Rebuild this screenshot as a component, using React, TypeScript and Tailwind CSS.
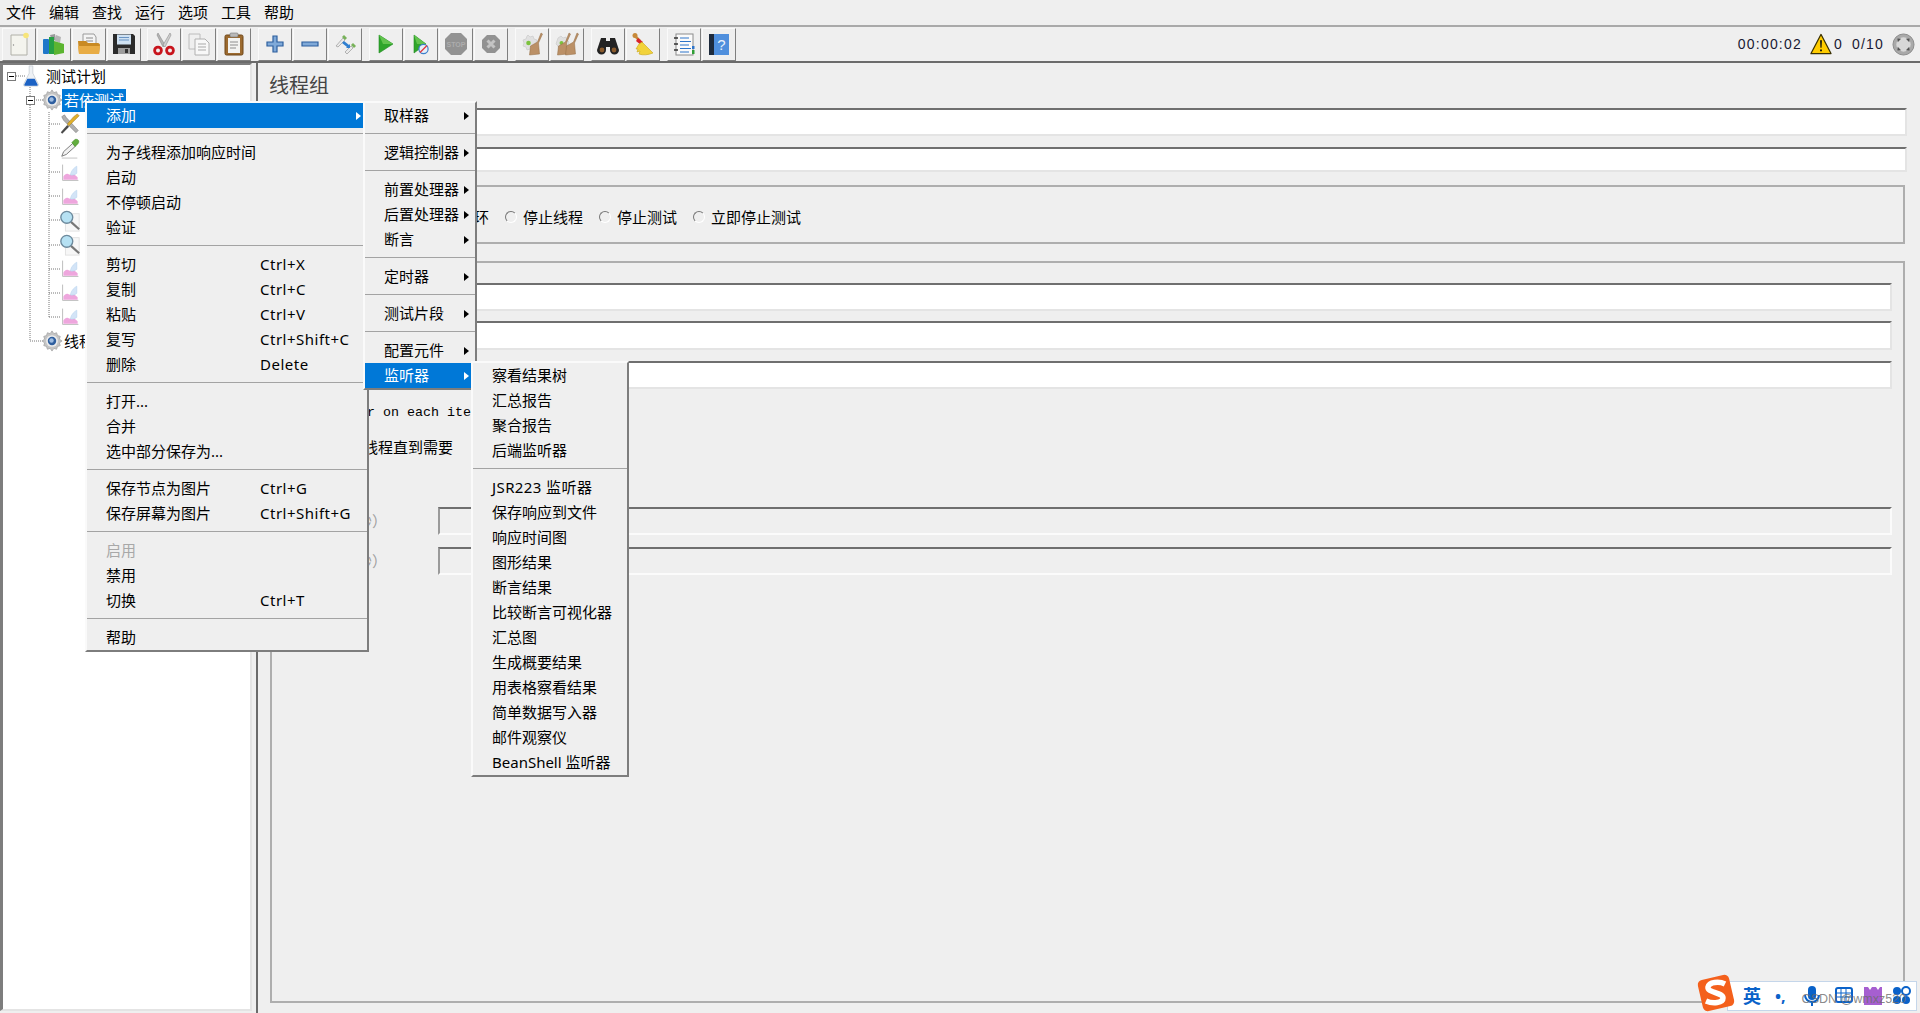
import React from 'react';

const menuBar = ['文件', '编辑', '查找', '运行', '选项', '工具', '帮助'];

type Row = { label?: string; keys?: string; arrow?: boolean; active?: boolean; off?: boolean; sep?: boolean; wide?: boolean };

const mainMenu: Row[] = [
  { label: '添加', arrow: true, active: true },
  { sep: true },
  { label: '为子线程添加响应时间' },
  { label: '启动' },
  { label: '不停顿启动' },
  { label: '验证' },
  { sep: true },
  { label: '剪切', keys: 'Ctrl+X' },
  { label: '复制', keys: 'Ctrl+C' },
  { label: '粘贴', keys: 'Ctrl+V' },
  { label: '复写', keys: 'Ctrl+Shift+C' },
  { label: '删除', keys: 'Delete' },
  { sep: true },
  { label: '打开...' },
  { label: '合并' },
  { label: '选中部分保存为...' },
  { sep: true },
  { label: '保存节点为图片', keys: 'Ctrl+G' },
  { label: '保存屏幕为图片', keys: 'Ctrl+Shift+G' },
  { sep: true },
  { label: '启用', off: true },
  { label: '禁用' },
  { label: '切换', keys: 'Ctrl+T' },
  { sep: true },
  { label: '帮助' },
];

const addMenu: Row[] = [
  { label: '取样器', arrow: true },
  { sep: true },
  { label: '逻辑控制器', arrow: true },
  { sep: true },
  { label: '前置处理器', arrow: true },
  { label: '后置处理器', arrow: true },
  { label: '断言', arrow: true },
  { sep: true },
  { label: '定时器', arrow: true },
  { sep: true },
  { label: '测试片段', arrow: true },
  { sep: true },
  { label: '配置元件', arrow: true },
  { label: '监听器', arrow: true, active: true },
];

const listenerMenu: Row[] = [
  { label: '察看结果树' },
  { label: '汇总报告' },
  { label: '聚合报告' },
  { label: '后端监听器' },
  { sep: true },
  { label: 'JSR223 监听器', wide: true },
  { label: '保存响应到文件' },
  { label: '响应时间图' },
  { label: '图形结果' },
  { label: '断言结果' },
  { label: '比较断言可视化器' },
  { label: '汇总图' },
  { label: '生成概要结果' },
  { label: '用表格察看结果' },
  { label: '简单数据写入器' },
  { label: '邮件观察仪' },
  { label: 'BeanShell 监听器' },
];

const Icon = ({ children, size = 24 }: { children: React.ReactNode; size?: number }) => (
  <svg width={size} height={size} viewBox="0 0 24 24" className="shrink-0">
    {children}
  </svg>
);

const Gear = ({ size = 22 }: { size?: number }) => (
  <Icon size={size}>
    <path d="M12 1l2 3 3-1 1 3 3 1-1 3 3 2-3 2 1 3-3 1-1 3-3-1-2 3-2-3-3 1-1-3-3-1 1-3-3-2 3-2-1-3 3-1 1-3 3 1z" fill="#c4c4c4" stroke="#a0a0a0" strokeWidth="0.8" />
    <circle cx="12" cy="12" r="6.400" fill="#ececec" />
    <circle cx="12" cy="12" r="4.600" fill="#2f5f9f" />
    <circle cx="11.500" cy="11.500" r="2.400" fill="#9dbbe0" />
  </Icon>
);

const Flask = () => (
  <Icon size={22}>
    <path d="M10 1h4v8l6 12c.5 1.200-.2 2-1.400 2H5.400C4.200 23 3.500 22.200 4 21l6-12z" fill="#eef1f5" stroke="#c2c9d0" strokeWidth="0.8" />
    <path d="M8 15h8l3.200 6.200c.3.9-.2 1.400-1 1.400H5.800c-.8 0-1.300-.5-1-1.400z" fill="#1c62c4" />
  </Icon>
);

const Tools = () => (
  <Icon size={22}>
    <path d="M3 4l3-2 2 3 13 14-2.500 2.500L5 8z" fill="#b0b0b0" stroke="#666" strokeWidth="0.5" />
    <path d="M22 3l-2-2-4 3-7 8 2 2 8-8z" fill="#e0b02c" stroke="#8c6c18" strokeWidth="0.5" />
    <path d="M9 13l-7 8 1.500 1.500L11 15z" fill="#4a4a4a" />
  </Icon>
);

const Pipette = () => (
  <Icon size={22}>
    <path d="M3 21l2-5L15 7l3 3-10 9z" fill="#f2f2f2" stroke="#666" strokeWidth="0.9" />
    <path d="M14 6l3-3c1.200-1 3.500-.5 4.300.7.800 1.300.2 2.800-.8 3.800l-3 3z" fill="#62ad3e" stroke="#3e8124" strokeWidth="0.5" />
    <path d="M3 23h17" stroke="#d5d5d5" strokeWidth="1.500" />
  </Icon>
);

const Chart = () => (
  <Icon size={19}>
    <path d="M2 2v20h20" fill="none" stroke="#b5b5b5" strokeWidth="1.100" />
    <path d="M3 21v-4c2-3 4-4 6-3s3 1 5 0 5 2 7 4v3z" fill="#eea6dd" />
    <path d="M12 15c0-4 4-9 8-11v9c-2 2-6 3-8 2z" fill="#d3e4f7" stroke="#a7c6e8" strokeWidth="0.5" />
  </Icon>
);

const Lens = () => (
  <Icon size={22}>
    <rect x="7" y="4" width="15" height="19" fill="#f7f7f7" stroke="#e0e0e0" />
    <path d="M13 13l9 8" stroke="#777" strokeWidth="2.400" />
    <circle cx="8.500" cy="8" r="6.500" fill="#b6e1f3" stroke="#6d8a9d" strokeWidth="1.500" />
  </Icon>
);

const Broom = ({ x = 0 }: { x?: number }) => (
  <path transform={`translate(${x} 0)`} d="M21 1l1.500 1-4 9 1 11-10 1 1-9 7-4z" fill="#bb9066" stroke="#936c44" strokeWidth="0.5" />
);

const toolbar: React.ReactNode[][] = [
  [
    <Icon key="new">
      <path d="M4 3h13l3 3v17H4z" fill="#f4f4ee" stroke="#b0b0a8" />
      <circle cx="19" cy="3.500" r="2.800" fill="#f7e57a" />
      <circle cx="6.500" cy="13" r="0.700" fill="#888" />
    </Icon>,
    <Icon key="templates">
      <path d="M8 3l5-1 1 6-4 1z" fill="#9a9a9a" />
      <path d="M14 3l5 2-1 6-5-2z" fill="#b5b5b5" />
      <rect x="1" y="7" width="6" height="15" rx="1" fill="#1f77c9" />
      <rect x="7" y="5" width="5" height="17" fill="#27a045" />
      <path d="M12 9l10 3v9l-10 2z" fill="#5cb531" />
    </Icon>,
    <Icon key="open">
      <path d="M6 2h11l2 3v8H6z" fill="#f4f4f4" stroke="#9a9a9a" />
      <path d="M9 6h7M9 9h7" stroke="#8a8a8a" />
      <path d="M1 9h8l2 2h10c1 0 2 1 2 2l-1 9H2z" fill="#c98a23" />
      <path d="M1 14h22l-1 8H2z" fill="#e8ac45" />
    </Icon>,
    <Icon key="save">
      <path d="M1 2h20l2 2v18H1z" fill="#2b2b2b" />
      <rect x="5" y="2.500" width="14" height="10" fill="#cfe1f2" />
      <path d="M7 5.500h10M7 8h10" stroke="#6b95c4" />
      <rect x="6" y="16" width="12" height="6" fill="#9c9c9c" />
      <rect x="13" y="17" width="3" height="4" fill="#333" />
    </Icon>,
  ],
  [
    <Icon key="cut">
      <path d="M6 1l7 12-2 2L5 3z" fill="#b5b5b5" stroke="#7d7d7d" strokeWidth="0.5" />
      <path d="M18 1l-7 12 2 2 6-12z" fill="#cfcfcf" stroke="#7d7d7d" strokeWidth="0.5" />
      <circle cx="6" cy="18.500" r="3.400" fill="none" stroke="#c8141c" strokeWidth="2.800" />
      <circle cx="18" cy="18.500" r="3.400" fill="none" stroke="#c8141c" strokeWidth="2.800" />
    </Icon>,
    <Icon key="copy">
      <path d="M2 2h11v15H2z" fill="#efefef" stroke="#bcbcbc" />
      <path d="M8 7h10l4 4v12H8z" fill="#f8f8f8" stroke="#b0b0b0" />
      <path d="M11 12h8M11 15h8M11 18h8" stroke="#a9a9a9" />
    </Icon>,
    <Icon key="paste">
      <rect x="3" y="3" width="18" height="20" rx="1.500" fill="#9c6a2f" stroke="#6e4718" />
      <rect x="8" y="1" width="8" height="4" rx="1" fill="#b9b9b9" stroke="#777" strokeWidth="0.6" />
      <path d="M6 6h12v15H6z" fill="#f3f3f1" />
      <path d="M8 10h8M8 13h8M8 16h6" stroke="#8d8d8d" />
    </Icon>,
  ],
  [
    <Icon key="plus">
      <path d="M10 4h4v6h6v4h-6v6h-4v-6H4v-4h6z" fill="#7fa9d8" stroke="#2d5f9e" strokeWidth="1.200" />
    </Icon>,
    <Icon key="minus">
      <path d="M4 10h16v4H4z" fill="#7fa9d8" stroke="#2d5f9e" strokeWidth="1.200" />
    </Icon>,
    <Icon key="toggle">
      <path d="M3 14l7-8 2 2-7 7z" fill="#e9e9e9" stroke="#9a9a9a" strokeWidth="0.7" />
      <path d="M9 5l2-2 3 3-2 2z" fill="#78b25a" />
      <path d="M12 20l6-6 2 2-6 6z" fill="#e9e9e9" stroke="#9a9a9a" strokeWidth="0.7" />
      <path d="M18 13l2-2 3 3-2 2z" fill="#78b25a" />
      <path d="M9 11l5 4-1 1h4v-4l-1 1-5-4z" fill="#2f7fd0" />
    </Icon>,
  ],
  [
    <Icon key="start">
      <path d="M5 3l14 9-14 9z" fill="#2fa52a" stroke="#1f8a22" strokeWidth="0.6" />
      <path d="M5 3l14 9H9z" fill="#62c34d" />
    </Icon>,
    <Icon key="start-nt">
      <path d="M5 3l12 9-12 9z" fill="#2fa52a" stroke="#1f8a22" strokeWidth="0.6" />
      <path d="M5 3l12 9H8z" fill="#62c34d" />
      <circle cx="14.500" cy="17" r="4.600" fill="#e6eff9" stroke="#3d7fcb" strokeWidth="1.200" />
      <path d="M11 20.500l7-7" stroke="#e3343c" strokeWidth="1.200" />
    </Icon>,
    <Icon key="stop">
      <path d="M7 1h10l6 6v10l-6 6H7l-6-6V7z" fill="#929292" />
      <text x="12" y="14.500" textAnchor="middle" fontSize="7" fontWeight="700" fill="#adadad" fontFamily="Liberation Sans">STOP</text>
    </Icon>,
    <Icon key="shutdown">
      <path d="M8 3h8l5 5v8l-5 5H8l-5-5V8z" fill="#929292" />
      <path d="M8.500 8.500l7 7M15.500 8.500l-7 7" stroke="#c4c4c4" strokeWidth="3" />
    </Icon>,
  ],
  [
    <Icon key="clear">
      <path d="M8 3l2 2 3-1 1 3 3 1-1 3 1 3-3 1-1 3-3-1-3 1-1-3-3-1 1-3-1-3 3-1 1-3z" fill="#e0e0e0" stroke="#c6c6c6" strokeWidth="0.6" />
      <circle cx="8.500" cy="11" r="2.300" fill="#7cc23e" />
      <Broom />
    </Icon>,
    <Icon key="clear-all">
      <path d="M6 4l2 2 3-1 1 3 2 2-1 3 0 3-3 1-3-1-3 1-1-3-2-2 1-3 1-3z" fill="#e0e0e0" stroke="#c6c6c6" strokeWidth="0.6" />
      <circle cx="6.500" cy="11" r="2" fill="#7cc23e" />
      <Broom x={-7} />
      <Broom x={1} />
    </Icon>,
  ],
  [
    <Icon key="search">
      <path d="M5 6h5v3h4V6h5l4 12a4.500 4.500 0 0 1-9 0v-3h-4v3a4.500 4.500 0 0 1-9 0z" fill="#232323" />
      <circle cx="6" cy="18" r="2.400" fill="#8a5a2b" />
      <circle cx="18" cy="18" r="2.400" fill="#8a5a2b" />
    </Icon>,
    <Icon key="reset">
      <circle cx="4" cy="3.500" r="2.500" fill="#c78a3a" />
      <path d="M4 4l5 5" stroke="#c78a3a" strokeWidth="2.500" />
      <path d="M7 6l5 4-2 3-5-4z" fill="#d8232a" />
      <path d="M11 10l11 11c-5 2-10 2.500-14 1l1-3-3 1 1-3-2 0 3-5z" fill="#f2d33b" stroke="#c9a71c" strokeWidth="0.6" />
    </Icon>,
  ],
  [
    <Icon key="functions">
      <rect x="4" y="2" width="17" height="21" fill="#fafafa" stroke="#8c8c8c" />
      <path d="M8 6h9M8 9.500h11M8 13h9M8 16.500h11M8 20h9" stroke="#2d74c9" strokeWidth="1.100" />
      <path d="M2 6h4M2 12h4M2 18h4" stroke="#333" strokeWidth="1.600" />
      <rect x="20" y="14" width="2.500" height="3" fill="#2d74c9" />
      <rect x="20" y="18" width="2.500" height="4" fill="#2f9e36" />
    </Icon>,
    <Icon key="help">
      <rect x="4" y="2" width="18" height="21" fill="#4f8fdd" />
      <rect x="2" y="2" width="5" height="21" fill="#1d2a3c" />
      <text x="14.500" y="18" textAnchor="middle" fontSize="15" fill="#e8f1fb" fontFamily="Liberation Sans">?</text>
    </Icon>,
  ],
];

const treeRows: { icon: React.ReactNode; label?: string; depth: number; selected?: boolean }[] = [
  { icon: <Gear />, label: '若依测试', depth: 1, selected: true },
  { icon: <Tools />, depth: 2 },
  { icon: <Pipette />, depth: 2 },
  { icon: <Chart />, depth: 2 },
  { icon: <Chart />, depth: 2 },
  { icon: <Lens />, depth: 2 },
  { icon: <Lens />, depth: 2 },
  { icon: <Chart />, depth: 2 },
  { icon: <Chart />, depth: 2 },
  { icon: <Chart />, depth: 2 },
  { icon: <Gear />, label: '线程组', depth: 1 },
];

const Expander = () => (
  <span className="flex h-[9px] w-[9px] shrink-0 items-center justify-center border border-[#7a7a7a] bg-white">
    <span className="h-px w-[5px] bg-black" />
  </span>
);

const Field = ({ disabled }: { disabled?: boolean }) => (
  <div
    className={`flex-1 border-[2px] border-t-[#6f6f6f] border-l-[#9a9a9a] ${
      disabled ? 'border-r-[#fbfbfb] border-b-[#fbfbfb] bg-[#efefef]' : 'border-r-[#e4e4e4] border-b-[#e4e4e4] bg-white'
    }`}
  />
);

const Radio = () => (
  <span className="h-[12px] w-[12px] shrink-0 rounded-full border-[1.5px] border-t-[#777777] border-l-[#777777] border-r-[#ffffff] border-b-[#ffffff] bg-[#efefef]" />
);

const Menu = ({ rows, className, shortcuts }: { rows: Row[]; className: string; shortcuts?: boolean }) => (
  <div className={`absolute flex flex-col border-[2px] border-t-[#fafafa] border-l-[#fafafa] border-r-[#7d7d7d] border-b-[#7d7d7d] bg-[#efefef] ${className}`}>
    {rows.map((r, i) =>
      r.sep ? (
        <div key={i} className="h-[12px] pt-[5px]">
          <div className="h-[1px] bg-[#a3a3a3]" />
        </div>
      ) : (
        <div key={i} className={`relative flex h-[25px] items-center pl-[19px] ${r.active ? 'bg-[#0078d7] text-white' : r.off ? 'text-[#a8a8a8]' : 'text-black'}`}>
          <span className={`whitespace-nowrap ${r.wide ? 'tracking-[0.4px]' : ''}`}>{r.label}</span>
          {shortcuts && r.keys && <span className="absolute left-[173px] whitespace-nowrap tracking-[0.5px]">{r.keys}</span>}
          {r.arrow && (
            <span className={`absolute right-[6px] h-0 w-0 border-y-[4.5px] border-l-[5px] border-y-transparent ${r.active ? 'border-l-white' : 'border-l-black'}`} />
          )}
        </div>
      ),
    )}
  </div>
);

export default function App() {
  return (
    <div className="relative flex h-[1013px] w-full flex-col overflow-hidden bg-[#efefef] font-['Noto_Sans','Noto_Sans_CJK_SC',sans-serif] text-[15px] leading-none text-black">
      <div className="flex h-[25px] items-center gap-[13px] pl-[6px]">
        {menuBar.map((m) => (
          <span key={m}>{m}</span>
        ))}
      </div>

      <div className="flex h-[38px] items-center border-t-[2px] border-b-[2px] border-t-[#a9a9a9] border-b-[#6b6b6b] pl-[2px] pr-[5px]">
        <div className="flex gap-[7px]">
          {toolbar.map((group, g) => (
            <div key={g} className={`flex gap-px ${g === 0 ? 'mr-[-1px]' : ''}`}>
              {group.map((ic, i) => (
                <div key={i} className="flex h-[33px] w-[34px] items-center justify-center border-[1px] border-t-[#fafafa] border-l-[#fafafa] border-r-[#7f7f7f] border-b-[#7f7f7f] bg-[#efefef]">
                  {ic}
                </div>
              ))}
            </div>
          ))}
        </div>
        <div className="ml-auto flex items-center font-['Liberation_Sans',sans-serif] text-[14px] tracking-[1.2px] text-[#1a1a33]">
          <span>00:00:02</span>
          <span className="ml-[8px]">
            <Icon size={22}>
              <path d="M12 1.500L23 22.500H1z" fill="#ffcc00" stroke="#3a3000" strokeWidth="1.200" strokeLinejoin="round" />
              <path d="M11 8h2l-.4 8h-1.200zM11 18h2v2h-2z" fill="#111" />
            </Icon>
          </span>
          <span className="ml-[2px]">0</span>
          <span className="ml-[9px]">0/10</span>
          <span className="ml-[8px]">
            <Icon size={23}>
              <circle cx="12" cy="12" r="11" fill="#a9a9a9" stroke="#8a8a8a" />
              <circle cx="12" cy="12" r="7.500" fill="#d8d8d8" />
              <path d="M12 3l2.500 3h-5zM12 21l2.500-3h-5zM3 12l3-2.500v5zM21 12l-3-2.500v5z" fill="#555" transform="rotate(45 12 12)" />
            </Icon>
          </span>
        </div>
      </div>

      <div className="flex min-h-0 flex-1">
        <div className="relative mb-[2px] w-[252px] border-t-[2px] border-l-[3px] border-r-[2px] border-b-[2px] border-t-[#7d7d7d] border-l-[#7d7d7d] border-r-[#e4e4e4] border-b-[#e4e4e4] bg-white">
          <svg width="100" height="300" className="absolute left-0 top-0" fill="none" stroke="#777" strokeDasharray="1 1">
            <path d="M13 11h10M27 16v260M27 35h12M27 276h12M46 47v205M46 59h12M46 83h12M46 107h12M46 131h12M46 155h12M46 180h12M46 204h12M46 228h12M46 252h12" />
          </svg>
          <div className="relative mt-[-1px] flex h-[24.1px] items-center">
            <span className="ml-[4px]"><Expander /></span>
            <span className="ml-[4px]"><Flask /></span>
            <span className="ml-[4px]">测试计划</span>
          </div>
          {treeRows.map((r, i) => (
            <div key={i} className={`relative flex h-[24.1px] items-center ${r.depth === 1 ? 'pl-[39px]' : 'pl-[57px]'}`}>
              {r.selected && <span className="absolute left-[23px]"><Expander /></span>}
              <span className="flex w-[20px] justify-center">{r.icon}</span>
              {r.label && (
                <span className={`whitespace-nowrap py-[4px] ${r.selected ? 'bg-[#0078d7] px-[2px] text-white' : 'ml-[2px]'}`}>{r.label}</span>
              )}
            </div>
          ))}
        </div>

        <div className="ml-[4px] flex flex-1 flex-col border-l-[2px] border-l-[#6b6b6b] pl-[12px]">
          <div className="flex h-[45px] items-center">
            <h1 className="ml-[-1px] text-[20px] font-normal text-[#444444]">线程组</h1>
          </div>
          <div className="mr-[13px] flex h-[28px] items-stretch pl-[90px]">
            <Field />
          </div>
          <div className="mr-[13px] mt-[11px] flex h-[25px] items-stretch pl-[90px]">
            <Field />
          </div>

          <div className="mr-[15px] mt-[13px] flex h-[59px] items-center gap-[16px] border-[2px] border-[#aeaeae] pl-[15px] pt-[5px]">
            {['继续', '启动下一进程循环', '停止线程', '停止测试', '立即停止测试'].map((t, i) => (
              <span key={t} className="flex items-center gap-[6px]">
                <Radio />
                <span className={i < 2 ? 'whitespace-nowrap' : ''}>{t}</span>
              </span>
            ))}
          </div>

          <div className="mb-[10px] mr-[15px] mt-[17px] flex flex-1 flex-col border-[2px] border-[#aeaeae] pl-[10px] pr-[11px] pt-[20px]">
            <div className="flex h-[28px] items-stretch pl-[156px]">
              <Field />
            </div>
            <div className="mt-[10px] flex h-[29px] items-stretch pl-[156px]">
              <Field />
            </div>
            <div className="mt-[11px] flex h-[28px] items-stretch pl-[156px]">
              <Field />
            </div>
            <div className="mt-[14px] flex h-[20px] items-center gap-[8px]">
              <span className="h-[13px] w-[13px] border border-[#777777] bg-white" />
              <span className="font-['Liberation_Mono',monospace] text-[13.33px]">Same user on each iteration</span>
            </div>
            <div className="mt-[14px] flex h-[20px] items-center gap-[8px]">
              <span className="h-[13px] w-[13px] border border-[#777777] bg-white" />
              <span>延迟创建线程直到需要</span>
            </div>
            <div className="mt-[50px] flex h-[28px] items-stretch">
              <span className="flex w-[156px] items-center text-[#a0a0a0]">持续时间（秒）</span>
              <Field disabled />
            </div>
            <div className="mt-[12px] flex h-[28px] items-stretch">
              <span className="flex w-[156px] items-center text-[#a0a0a0]">启动延迟（秒）</span>
              <Field disabled />
            </div>
          </div>
        </div>
      </div>

      <Menu rows={mainMenu} shortcuts className="left-[85px] top-[101px] w-[284px]" />
      <Menu rows={addMenu} className="left-[363px] top-[101px] w-[114px]" />
      <Menu rows={listenerMenu} className="left-[471px] top-[361px] w-[158px]" />

      <div className="absolute bottom-[2px] right-[3px] flex h-[30px] w-[190px] items-center border border-[#c5d6ea] bg-white pl-[15px]">
        <span className="text-[18px] font-bold text-[#0a62c9]">英</span>
        <span className="ml-[14px] text-[16px] font-bold text-[#0a62c9]">•,</span>
        <svg width="112" height="24" viewBox="0 0 112 24" className="ml-[14px] shrink-0">
          <rect x="8" y="2" width="8" height="14" rx="4" fill="#0a62c9" />
          <path d="M5 11a7 7 0 0 0 14 0M12 18v4" fill="none" stroke="#0a62c9" strokeWidth="2" />
          <rect x="36" y="4" width="16" height="14" rx="2" fill="none" stroke="#0a62c9" strokeWidth="2" />
          <path d="M36 9h16M36 13h16M41 4v14M46 4v14" stroke="#0a62c9" />
          <path d="M64 3h4l2 3 2-3h4l2 3 2-3h2v18H64z" fill="#a65fd0" />
          <circle cx="97" cy="7" r="4" fill="#0a62c9" />
          <circle cx="106" cy="7" r="4" fill="none" stroke="#0a62c9" strokeWidth="2" />
          <circle cx="97" cy="16" r="4" fill="#0a62c9" />
          <circle cx="106" cy="16" r="4" fill="#0a62c9" />
        </svg>
      </div>
      <span className="absolute bottom-[5px] right-[14px] font-['Liberation_Sans',sans-serif] text-[12.5px] leading-[18px] text-[#6b6b6b]/80">CSDN @wmxz520</span>
      <svg width="40" height="40" viewBox="0 0 40 40" className="absolute bottom-0 left-[1696px]">
        <rect x="4" y="4" width="32" height="32" rx="5" transform="rotate(-13 20 20)" fill="#f4601c" />
        <path d="M29 11c-6-3-16-2-17 3-1 6 15 5 15 11 0 5-10 6-17 3" fill="none" stroke="#fff" strokeWidth="5.500" />
      </svg>
    </div>
  );
}
